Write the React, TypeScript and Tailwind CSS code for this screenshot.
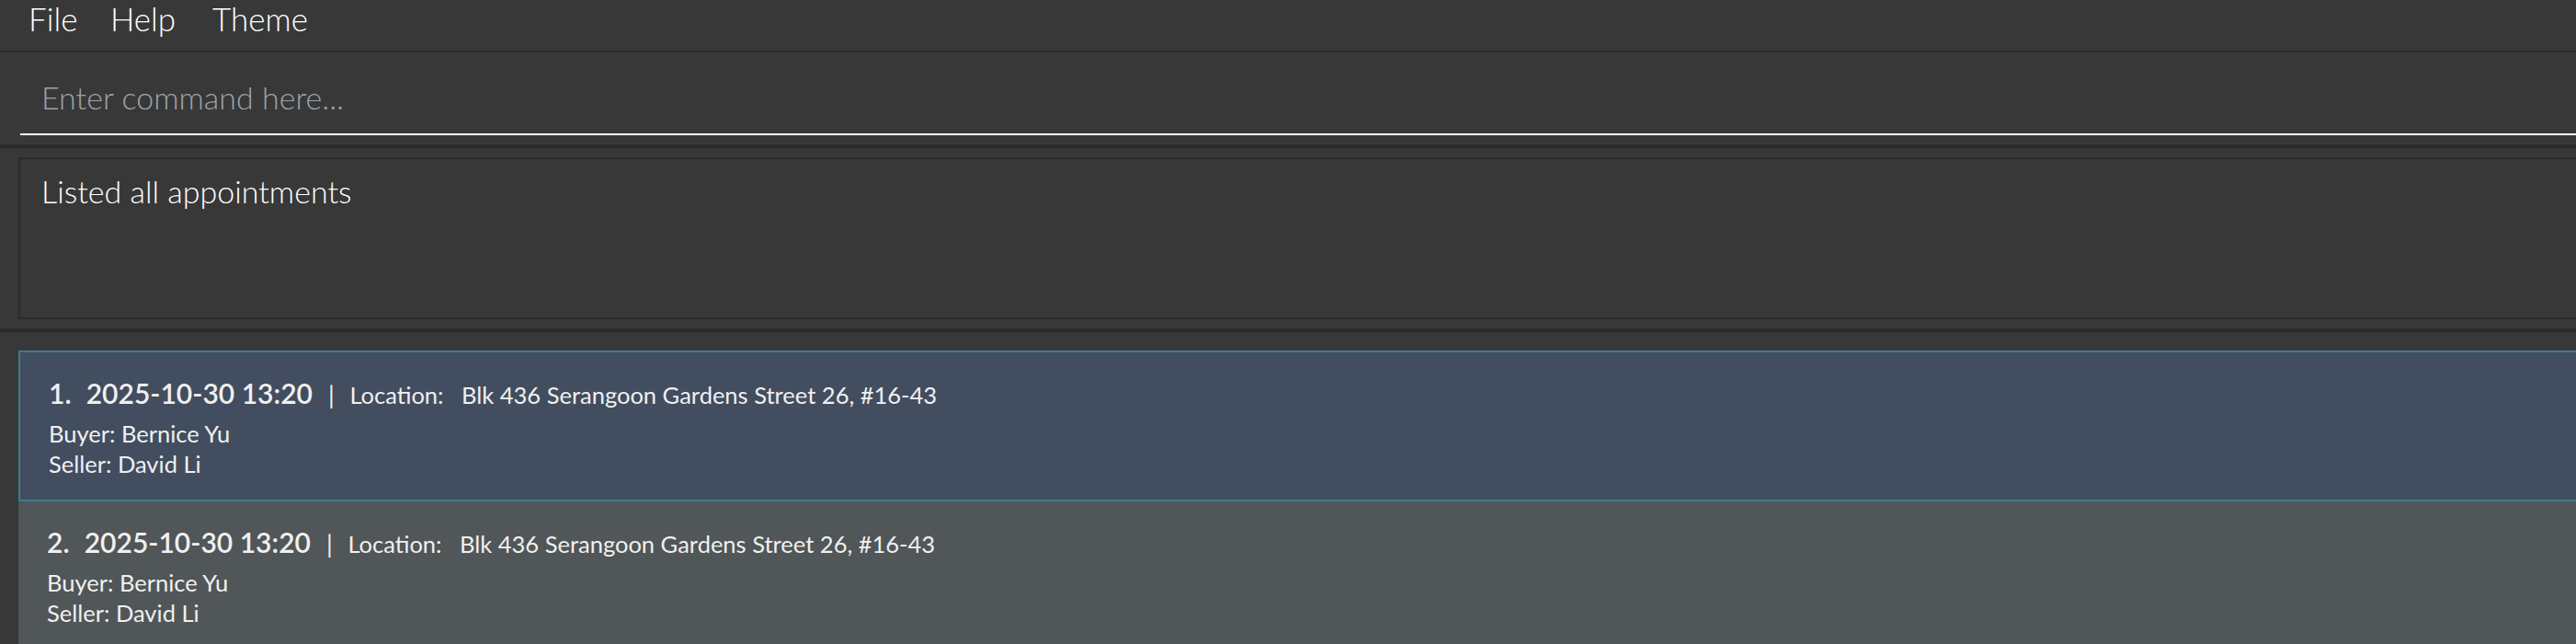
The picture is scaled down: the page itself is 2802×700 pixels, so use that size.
import React from 'react';

type Appointment = {
  dateTime: string;
  location: string;
  buyer: string;
  seller: string;
};

const appointments: Appointment[] = [
  { dateTime: '2025-10-30 13:20', location: 'Blk 436 Serangoon Gardens Street 26, #16-43', buyer: 'Bernice Yu', seller: 'David Li' },
  { dateTime: '2025-10-30 13:20', location: 'Blk 436 Serangoon Gardens Street 26, #16-43', buyer: 'Bernice Yu', seller: 'David Li' },
];

const AppointmentCard = ({ index, appt, selected }: { index: number; appt: Appointment; selected: boolean }) => {
  return (
    <div
      className={
        selected
          ? 'h-[164px] flex-none border-2 border-r-0 border-[#3e7b91] bg-[#424d5f] pl-[31px] pt-[23px]'
          : 'h-[164px] flex-none bg-[#515658] pl-[31px] pt-[23px]'
      }
    >
      <div className="flex items-baseline text-[#f0f0f0] whitespace-nowrap">
        <span className="w-[40.7px] flex-none text-[30px] font-semibold leading-[42px]">{index}.</span>
        <span className="w-[263.4px] flex-none text-[30px] font-semibold leading-[42px]">{appt.dateTime}</span>
        <span className="w-[23.3px] flex-none text-[27px]">|</span>
        <span className="w-[121.7px] flex-none text-[25.5px]">Location:</span>
        <span className="text-[25.5px]">{appt.location}</span>
      </div>
      <div className="mt-[5.5px] text-[25.5px] leading-[33.3px] text-[#f0f0f0]">
        <div>Buyer: {appt.buyer}</div>
        <div>Seller: {appt.seller}</div>
      </div>
    </div>
  );
};

export default function App() {
  return (
    <div className="w-[2802px] h-[700px] overflow-hidden bg-[#383838] flex flex-col font-['Lato','Open_Sans',sans-serif]">
      {/* menu bar */}
      <div className="h-[55px] flex-none flex items-start pl-[31px] pt-[2px] text-[35px] font-light leading-[36px] text-white">
        <span className="w-[89px]">File</span>
        <span className="w-[111px]">Help</span>
        <span>Theme</span>
      </div>
      <div className="h-[2px] flex-none bg-[#2b2b2b]" />

      {/* command box */}
      <div className="h-[100px] flex-none pl-[22px]">
        <div className="pt-[28px] pb-[19px] pl-[23px] border-b-2 border-white">
          <input
            className="block w-full h-[41px] bg-transparent outline-none text-[34px] font-light leading-[41px] text-white placeholder:text-[#9da3a8]"
            placeholder="Enter command here..."
          />
        </div>
      </div>
      <div className="h-[4px] flex-none bg-[#2b2b2b]" />

      {/* result display */}
      <div className="h-[196px] flex-none pt-[10px] pl-[20px]">
        <div className="h-[176px] border-2 border-r-0 border-[#2b2b2b] pl-[23px] pt-[14px]">
          <div className="text-[34px] font-light leading-[42px] text-white">Listed all appointments</div>
        </div>
      </div>
      <div className="h-[4px] flex-none bg-[#2b2b2b]" />

      {/* appointment list */}
      <div className="flex-1 pt-[20px] pl-[20px] flex flex-col">
        {appointments.map((a, i) => (
          <AppointmentCard key={i} index={i + 1} appt={a} selected={i === 0} />
        ))}
      </div>
    </div>
  );
}
